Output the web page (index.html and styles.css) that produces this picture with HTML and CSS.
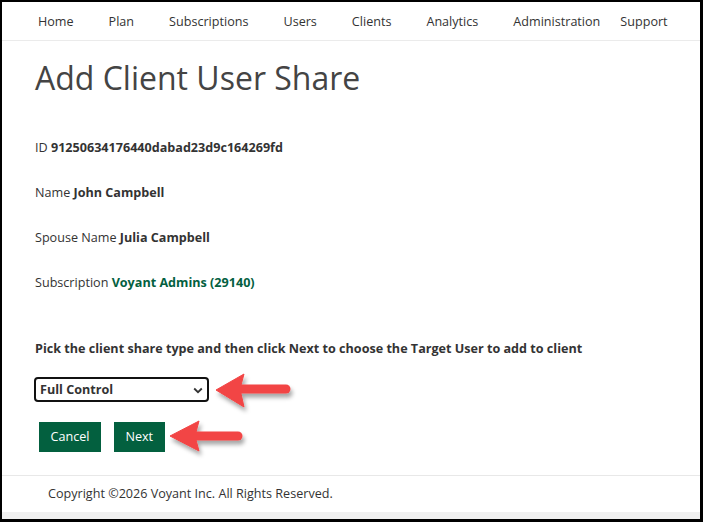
FILE: index.html
```html
<!DOCTYPE html>
<html>
<head>
<meta charset="utf-8">
<link rel="stylesheet" href="styles.css">
</head>
<body>
<div class="frame">
  <nav class="nav">
    <a class="nav-item">Home</a>
    <a class="nav-item">Plan</a>
    <a class="nav-item">Subscriptions</a>
    <a class="nav-item">Users</a>
    <a class="nav-item">Clients</a>
    <a class="nav-item">Analytics</a>
    <a class="nav-item">Administration</a>
    <a class="nav-item last">Support</a>
  </nav>
  <main class="content">
    <h1 class="title">Add Client User Share</h1>
    <div class="fields">
      <p class="field">ID <b>91250634176440dabad23d9c164269fd</b></p>
      <p class="field">Name <b>John Campbell</b></p>
      <p class="field">Spouse Name <b>Julia Campbell</b></p>
      <p class="field">Subscription <b class="link">Voyant Admins (29140)</b></p>
    </div>
    <p class="prompt">Pick the client share type and then click Next to choose the Target User to add to client</p>
    <div class="select">
      <span>Full Control</span>
      <svg class="chev" width="10" height="7" viewBox="0 0 10 7"><path d="M1.2 1.5 L5 5.2 L8.8 1.5" fill="none" stroke="#333" stroke-width="1.8"/></svg>
    </div>
    <div class="buttons">
      <button class="btn">Cancel</button>
      <button class="btn">Next</button>
    </div>
  </main>
  <footer class="footer">
    <div class="copy">Copyright ©2026 Voyant Inc. All Rights Reserved.</div>
    <div class="band"></div>
  </footer>
</div>
<svg class="arrows" width="703" height="522" viewBox="0 0 703 522">
  <defs>
    <filter id="sh" x="-20%" y="-40%" width="150%" height="190%">
      <feDropShadow dx="2" dy="4" stdDeviation="2.2" flood-color="#000" flood-opacity="0.35"/>
    </filter>
  </defs>
  <g filter="url(#sh)" fill="#f24545" stroke="#f24545">
    <line x1="240" y1="389" x2="286" y2="389" stroke-width="9" stroke-linecap="round"/>
    <polygon points="216,390 244,374 240,389 244,407" stroke-width="1" stroke-linejoin="round"/>
    <line x1="196" y1="436" x2="238" y2="436" stroke-width="9" stroke-linecap="round"/>
    <polygon points="170,436 199,421 195,436 199,451" stroke-width="1" stroke-linejoin="round"/>
  </g>
</svg>
</body>
</html>
```
FILE: styles.css
```css
* { box-sizing: border-box; }
html, body { margin: 0; padding: 0; }
body {
  position: relative;
  width: 703px;
  height: 522px;
  font-family: "Open Sans", "Noto Sans", sans-serif;
  color: #333;
  background: #000;
}
.frame {
  width: 703px;
  height: 522px;
  border-style: solid;
  border-color: #000;
  border-width: 2px 3px 3px 2px;
  background: #fff;
  display: flex;
  flex-direction: column;
}
.nav {
  height: 39px;
  border-bottom: 1px solid #ebebeb;
  display: flex;
  align-items: center;
  padding-left: 36px;
  font-size: 12.6px;
  color: #333;
}
.nav-item { margin-right: 35px; }
.nav-item.last { margin-left: -15px; }
.content {
  flex: 1;
  padding: 0 0 0 33px;
}
.title {
  margin: 16px 0 0 0;
  font-size: 32px;
  font-weight: 400;
  color: #444;
  line-height: 42px;
}
.fields { margin-top: 40px; }
.field {
  margin: 0;
  font-size: 12.6px;
  line-height: 18px;
  height: 45px;
}
.field b { font-weight: 700; color: #333; }
.field b.link { color: #03603f; }
.prompt {
  margin: 21px 0 0 0;
  font-size: 12.6px;
  font-weight: 700;
  line-height: 18px;
  color: #333;
}
.select {
  margin-top: 19px;
  margin-left: -1px;
  width: 175px;
  height: 25px;
  border: 2px solid #111;
  border-radius: 4px;
  display: flex;
  align-items: center;
  justify-content: space-between;
  padding: 0 4px 0 4px;
  font-size: 12.6px;
  font-weight: 700;
  color: #333;
}
.chev { display: block; margin-top: 1px; }
.buttons {
  margin-top: 20px;
  margin-left: 4px;
  display: flex;
  gap: 13px;
}
.btn {
  height: 30px;
  border: 0;
  border-radius: 0;
  background: #03603f;
  color: #fff;
  font-family: "Open Sans", "Noto Sans", sans-serif;
  font-size: 12.6px;
  padding: 0 11.5px;
  line-height: 30px;
}
.footer {
  border-top: 1px solid #e8e8e8;
}
.copy {
  height: 36px;
  padding-left: 46px;
  font-size: 12.6px;
  line-height: 36px;
  color: #333;
}
.band {
  height: 7px;
  background: #f0f0f0;
}
.arrows {
  position: absolute;
  left: 0;
  top: 0;
  pointer-events: none;
}
```
